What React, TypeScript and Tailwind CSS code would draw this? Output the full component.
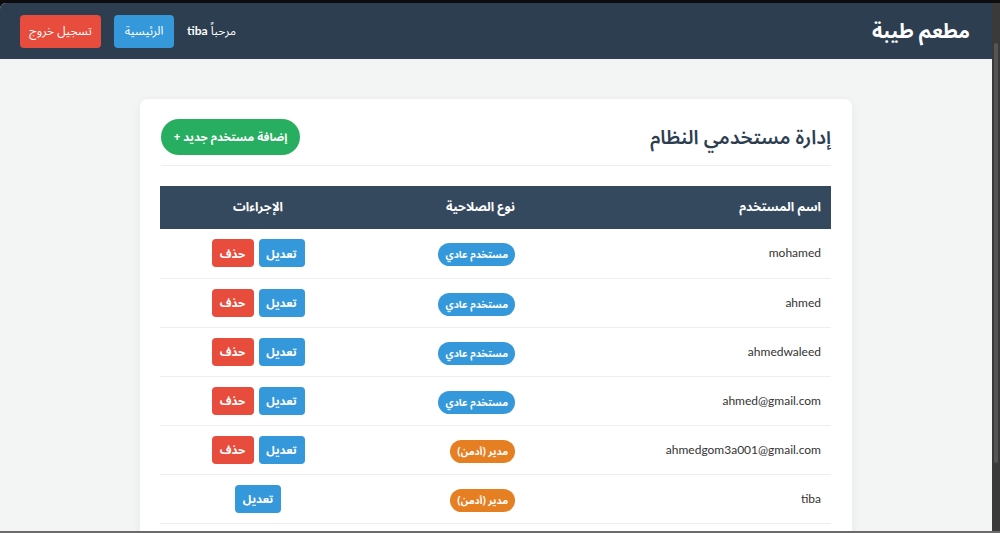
import React from "react";

type U = { name: string; admin: boolean; del: boolean };
const users: U[] = [
  { name: "mohamed", admin: false, del: true },
  { name: "ahmed", admin: false, del: true },
  { name: "ahmedwaleed", admin: false, del: true },
  { name: "ahmed@gmail.com", admin: false, del: true },
  { name: "ahmedgom3a001@gmail.com", admin: true, del: true },
  { name: "tiba", admin: true, del: false },
];

export default function App() {
  return (
    <div
      className="w-[1000px] h-[533px] overflow-hidden bg-[#0d0d0d] flex flex-col"
      style={{ fontFamily: '"Open Sans", "Noto Sans Arabic", "DejaVu Sans", sans-serif' }}
    >
      <div className="h-[3px] shrink-0" />
      <div className="flex flex-1 min-h-0">
        <div dir="rtl" className="w-[992px] h-full bg-[#f3f4f4] overflow-hidden rounded-tl-[6px] flex flex-col">
          <header className="h-[56px] shrink-0 bg-[#2c3e50] flex items-center justify-between pr-[22px] pl-[20px]">
            <h1 className="text-white text-[20px] font-bold leading-none">مطعم طيبة</h1>
            <div className="flex items-center gap-[13px]">
              <span className="text-white text-[12px]">
                مرحباً <b className="font-bold font-[Lato]">tiba</b>
              </span>
              <button className="h-[33px] w-[60px] rounded-[4px] bg-[#3498db] text-white text-[12px]">الرئيسية</button>
              <button className="h-[33px] w-[81px] rounded-[4px] bg-[#e74c3c] text-white text-[12px]">تسجيل خروج</button>
            </div>
          </header>
          <main className="pt-[40px]">
            <div className="w-[712px] mx-auto bg-white rounded-[8px] shadow-[0_2px_10px_rgba(0,0,0,0.06)] px-[21px] pt-[20px] pb-[20px]">
              <div className="flex items-center justify-between border-b border-[#eeeeee] pb-[10px]">
                <h2 className="text-[#2c3e50] text-[19.5px] font-semibold leading-none">إدارة مستخدمي النظام</h2>
                <button className="h-[36px] w-[139px] rounded-full bg-[#27ae60] text-white text-[11.5px] font-bold">
                  إضافة مستخدم جديد +
                </button>
              </div>
              <table className="mt-[20px] w-[671px] border-collapse">
                <thead>
                  <tr className="bg-[#34495e] text-white h-[43px]">
                    <th className="w-[306px] text-right pr-[10px] text-[12.5px] font-bold">اسم المستخدم</th>
                    <th className="w-[169px] text-right pr-[10px] text-[12.5px] font-bold">نوع الصلاحية</th>
                    <th className="w-[196px] text-center text-[12.5px] font-bold">الإجراءات</th>
                  </tr>
                </thead>
                <tbody>
                  {users.map((u) => (
                    <tr key={u.name} className="h-[49px] border-b border-[#eeeeee]">
                      <td className="text-right pr-[10px] text-[12px] text-[#333333] font-[Lato]">{u.name}</td>
                      <td className="text-right pr-[10px]">
                        {u.admin ? (
                          <span className="inline-flex items-center h-[23px] px-[7px] rounded-full bg-[#e67e22] text-white text-[10px] font-bold">
                            مدير (أدمن)
                          </span>
                        ) : (
                          <span className="inline-flex items-center h-[23px] px-[7px] rounded-full bg-[#3498db] text-white text-[10px] font-bold">
                            مستخدم عادي
                          </span>
                        )}
                      </td>
                      <td>
                        <div className="flex justify-center gap-[5px]">
                          <button className="h-[28px] w-[46px] rounded-[4px] bg-[#3498db] text-white text-[11.5px] font-bold">تعديل</button>
                          {u.del && (
                            <button className="h-[28px] w-[42px] rounded-[4px] bg-[#e74c3c] text-white text-[11.5px] font-bold">حذف</button>
                          )}
                        </div>
                      </td>
                    </tr>
                  ))}
                </tbody>
              </table>
              <div className="h-[60px]" />
            </div>
          </main>
        </div>
        <div className="w-[8px] h-full bg-[#3a3a3a] flex flex-col items-center pt-[40px]">
          <div className="w-[4px] h-[420px] bg-[#555555] rounded-full" />
        </div>
      </div>
      <div className="h-[2px] shrink-0 bg-[#6b6b6b]" />
    </div>
  );
}
